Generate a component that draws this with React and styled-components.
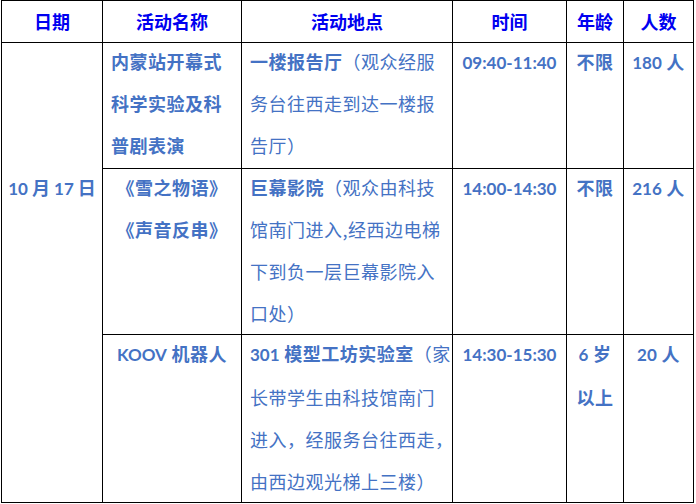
import React from 'react'
import styled, {createGlobalStyle} from 'styled-components'

const HEAD = '#0000f0'
const TEXT = '#4472c4'

const Global = createGlobalStyle`
    body{
        margin: 0;
        background: #ffffff;
    }
`

const Page = styled.div`
    padding: 0 0 0 1px;
`

const Sheet = styled.table`
    border-collapse: collapse;
    table-layout: fixed;
    width: 693px;
    font-family: "Noto Sans CJK SC", "Noto Sans", sans-serif;
    font-size: 18px;
    color: ${TEXT};
    td, th{
        border: 1px solid #000000;
        padding: 0;
        vertical-align: top;
        white-space: nowrap;
        overflow: visible;
    }
`

const HeadCell = styled.th`
    height: 41px;
    line-height: 41px;
    font-weight: 700;
    color: ${HEAD};
    text-align: center;
    vertical-align: middle !important;
`

const Cell = styled.td`
    height: ${props=>props.h}px;
    letter-spacing: 0.5px;
    text-align: ${props=>props.left ? 'left' : 'center'};
    padding: ${props=>props.left ? '0 0 0 8px' : '0'} !important;
    font-weight: ${props=>props.bold ? 700 : 400};
`

const Lines = styled.div`
    line-height: 42px;
    margin-top: -3px;
`

const DateCell = styled.td`
    padding-top: 123px !important;
    text-align: center;
    line-height: 42px;
    font-weight: 700;
`

const Num = styled.span`
    font-family: Lato, "Noto Sans", sans-serif;
    font-size: 17px;
    font-weight: 700;
    letter-spacing: 0;
`

const Strong = styled.span`
    font-weight: 700;
`

const COLS = [101, 139, 211, 114, 57, 70]
const HEADERS = ['日期', '活动名称', '活动地点', '时间', '年龄', '人数']

function App(){
    return (
        <Page>
            <Global/>
            <Sheet>
                <colgroup>
                    {COLS.map((w, i)=><col key={i} style={{width: w}}/>)}
                </colgroup>
                <thead>
                    <tr>
                        {HEADERS.map((h)=><HeadCell key={h}>{h}</HeadCell>)}
                    </tr>
                </thead>
                <tbody>
                    <tr>
                        <DateCell rowSpan={3}><Num>10</Num> 月 <Num>17</Num> 日</DateCell>
                        <Cell h={125} bold left><Lines>内蒙站开幕式<br/>科学实验及科<br/>普剧表演</Lines></Cell>
                        <Cell h={125} left><Lines><Strong>一楼报告厅</Strong>（观众经服<br/>务台往西走到达一楼报<br/>告厅）</Lines></Cell>
                        <Cell h={125}><Lines><Num>09:40-11:40</Num></Lines></Cell>
                        <Cell h={125} bold><Lines>不限</Lines></Cell>
                        <Cell h={125} bold><Lines><Num>180</Num> 人</Lines></Cell>
                    </tr>
                    <tr>
                        <Cell h={165} bold><Lines>《雪之物语》<br/>《声音反串》</Lines></Cell>
                        <Cell h={165} left><Lines><Strong>巨幕影院</Strong>（观众由科技<br/>馆南门进入,经西边电梯<br/>下到负一层巨幕影院入<br/>口处）</Lines></Cell>
                        <Cell h={165}><Lines><Num>14:00-14:30</Num></Lines></Cell>
                        <Cell h={165} bold><Lines>不限</Lines></Cell>
                        <Cell h={165} bold><Lines><Num>216</Num> 人</Lines></Cell>
                    </tr>
                    <tr>
                        <Cell h={165} bold><Lines><Num>KOOV</Num> 机器人</Lines></Cell>
                        <Cell h={165} left><Lines><Strong><Num>301</Num> 模型工坊实验室</Strong>（家<br/>长带学生由科技馆南门<br/>进入，经服务台往西走，<br/>由西边观光梯上三楼）</Lines></Cell>
                        <Cell h={165}><Lines><Num>14:30-15:30</Num></Lines></Cell>
                        <Cell h={165} bold><Lines><Num>6</Num> 岁<br/>以上</Lines></Cell>
                        <Cell h={165} bold><Lines><Num>20</Num> 人</Lines></Cell>
                    </tr>
                </tbody>
            </Sheet>
        </Page>
    )
}

export default App
